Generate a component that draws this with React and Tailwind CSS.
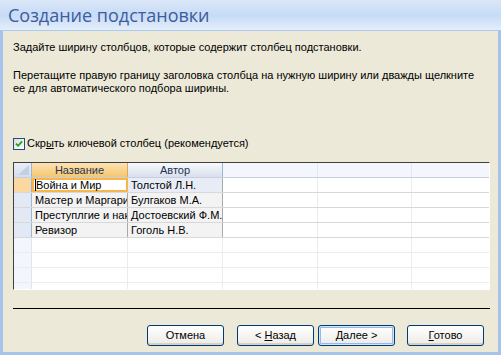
import React from 'react';

// Lookup wizard step: column width setup (Access 2007 style dialog)

const rows = [
  ['Война и Мир', 'Толстой Л.Н.'],
  ['Мастер и Маргарита', 'Булгаков М.А.'],
  ['Преступлгие и наказание', 'Достоевский Ф.М.'],
  ['Ревизор', 'Гоголь Н.В.'],
];

const Btn = ({ children, primary }) => (
  <button
    className={
      'h-[21px] w-[77px] rounded-[3px] border border-[#003c74] bg-gradient-to-b from-white to-[#ecebe6] text-[11px] text-black flex items-center justify-center ' +
      (primary ? 'shadow-[inset_0_0_0_1px_#cee7ff,inset_0_0_0_2px_#98b8ea]' : 'shadow-[inset_0_-2px_0_#d6d0c5]')
    }
  >
    <span className="whitespace-pre">{children}</span>
  </button>
);

const Cell = ({ className = '', children }) => (
  <div className={'h-full shrink-0 overflow-hidden whitespace-nowrap leading-[14px] ' + className}>{children}</div>
);

export default function App() {
  return (
    <div
      className="w-[501px] h-[355px] flex flex-col bg-[#ece9d8] overflow-hidden text-black"
      style={{ fontFamily: '"Liberation Sans", Arial, sans-serif' }}
    >
      {/* title bar */}
      <div className="h-[31px] shrink-0 border-b border-[#a8c9f1] bg-gradient-to-b from-[#dbe7f8] via-[#c6dbf6] to-[#e4eefb] flex items-center pl-[8px]">
        <span className="text-[18px] text-[#3d5c9c] leading-none" style={{ fontFamily: '"Open Sans", sans-serif' }}>
          Создание подстановки
        </span>
      </div>

      {/* body */}
      <div className="flex-1 flex flex-col border-l-[3px] border-r-[3px] border-b-[3px] border-[#a6c3ec] pl-[10px] pr-[9px] text-[11px]">
        <p className="mt-[10px] leading-[13px]">Задайте ширину столбцов, которые содержит столбец подстановки.</p>
        <p className="mt-[15px] leading-[13px] whitespace-nowrap">
          Перетащите правую границу заголовка столбца на нужную ширину или дважды щелкните
          <br />
          ее для автоматического подбора ширины.
        </p>

        <div className="mt-[42px] flex items-center gap-[2px] h-[13px]">
          <div className="w-[12px] h-[12px] border border-[#1c5180] bg-gradient-to-br from-[#dcdcd7] to-white flex items-center justify-center">
            <svg width="8" height="8" viewBox="0 0 9 9">
              <path d="M1 4 L3.5 6.5 L8 1.5" stroke="#21a121" strokeWidth="2" fill="none" />
            </svg>
          </div>
          <span className="leading-[13px]">
            Скр<span className="underline">ы</span>ть ключевой столбец (рекомендуется)
          </span>
        </div>

        {/* datasheet */}
        <div className="mt-[12px] h-[128px] w-[477px] border-t border-l border-[#404040] border-r border-b border-r-white border-b-white overflow-hidden bg-white">
          {/* header */}
          <div className="flex h-[15px] border-b border-[#c5cfdf] text-[#1f3552]">
            <Cell className="w-[18px] bg-gradient-to-b from-[#e9eef6] to-[#d5deec] border-r border-[#9eb6ce] relative">
              <svg className="absolute left-[3px] top-[2px]" width="13" height="11" viewBox="0 0 13 11">
                <path d="M12 0 L12 10 L1 10 Z" fill="#c3cfe2" />
              </svg>
            </Cell>
            <Cell className="w-[96px] bg-gradient-to-b from-[#fbe2b4] to-[#f6c66b] border-r border-[#e2a94a] text-center">
              Название
            </Cell>
            <Cell className="w-[95px] bg-gradient-to-b from-[#f8fafd] to-[#d8e0ec] border-r border-[#9eb6ce] text-center">
              Автор
            </Cell>
            <Cell className="w-[95px] bg-[#f4f6fd] border-r border-[#e3e7ef]" />
            <Cell className="w-[94px] bg-[#f4f6fd] border-r border-[#e3e7ef]" />
            <Cell className="flex-1 bg-[#f4f6fd]" />
          </div>

          {rows.map(([a, b], i) => (
            <div key={i} className="flex h-[15px] border-b border-[#d8d8d8]">
              <Cell className={'w-[18px] border-r border-[#9eb6ce] ' + (i === 0 ? 'bg-[#fbd8a2]' : 'bg-[#e3e9f4]')} />
              {i === 0 ? (
                <div className="w-[96px] h-full shrink-0 whitespace-nowrap bg-white border-[2px] border-[#f7b64a] pl-[1px] leading-[11px]">
                  <span className="border-l border-black">{a}</span>
                </div>
              ) : (
                <Cell className="w-[96px] bg-[#f3f3f3] border-r border-[#a9a9a9] pl-[3px]">{a}</Cell>
              )}
              <Cell className={'w-[95px] border-r border-[#a9a9a9] pl-[3px] ' + (i === 0 ? 'bg-[#e7ecf7]' : 'bg-[#f3f3f3]')}>{b}</Cell>
              <Cell className="w-[95px] border-r border-[#ececec]" />
              <Cell className="w-[94px] border-r border-[#ececec]" />
              <Cell className="flex-1" />
            </div>
          ))}

          {[0, 1, 2, 3].map((i) => (
            <div key={'e' + i} className="flex h-[15px] border-b border-[#ececec]">
              <Cell className="w-[18px] bg-[#f4f6fd] border-r border-[#dfe4ee]" />
              <Cell className="w-[96px] border-r border-[#ececec]" />
              <Cell className="w-[95px] border-r border-[#ececec]" />
              <Cell className="w-[95px] border-r border-[#ececec]" />
              <Cell className="w-[94px] border-r border-[#ececec]" />
              <Cell className="flex-1" />
            </div>
          ))}
        </div>

        <div className="mt-[18px] w-[477px] h-px bg-black" />

        <div className="mt-[16px] flex items-center pl-[134px]">
          <Btn>Отмена</Btn>
          <div className="ml-[13px]">
            <Btn>
              {'< '}<span className="underline">Н</span>азад
            </Btn>
          </div>
          <div className="ml-[4px]">
            <Btn primary>
              <span className="underline">Д</span>{'алее >'}
            </Btn>
          </div>
          <div className="ml-[12px]">
            <Btn>
              <span className="underline">Г</span>отово
            </Btn>
          </div>
        </div>
      </div>
    </div>
  );
}
